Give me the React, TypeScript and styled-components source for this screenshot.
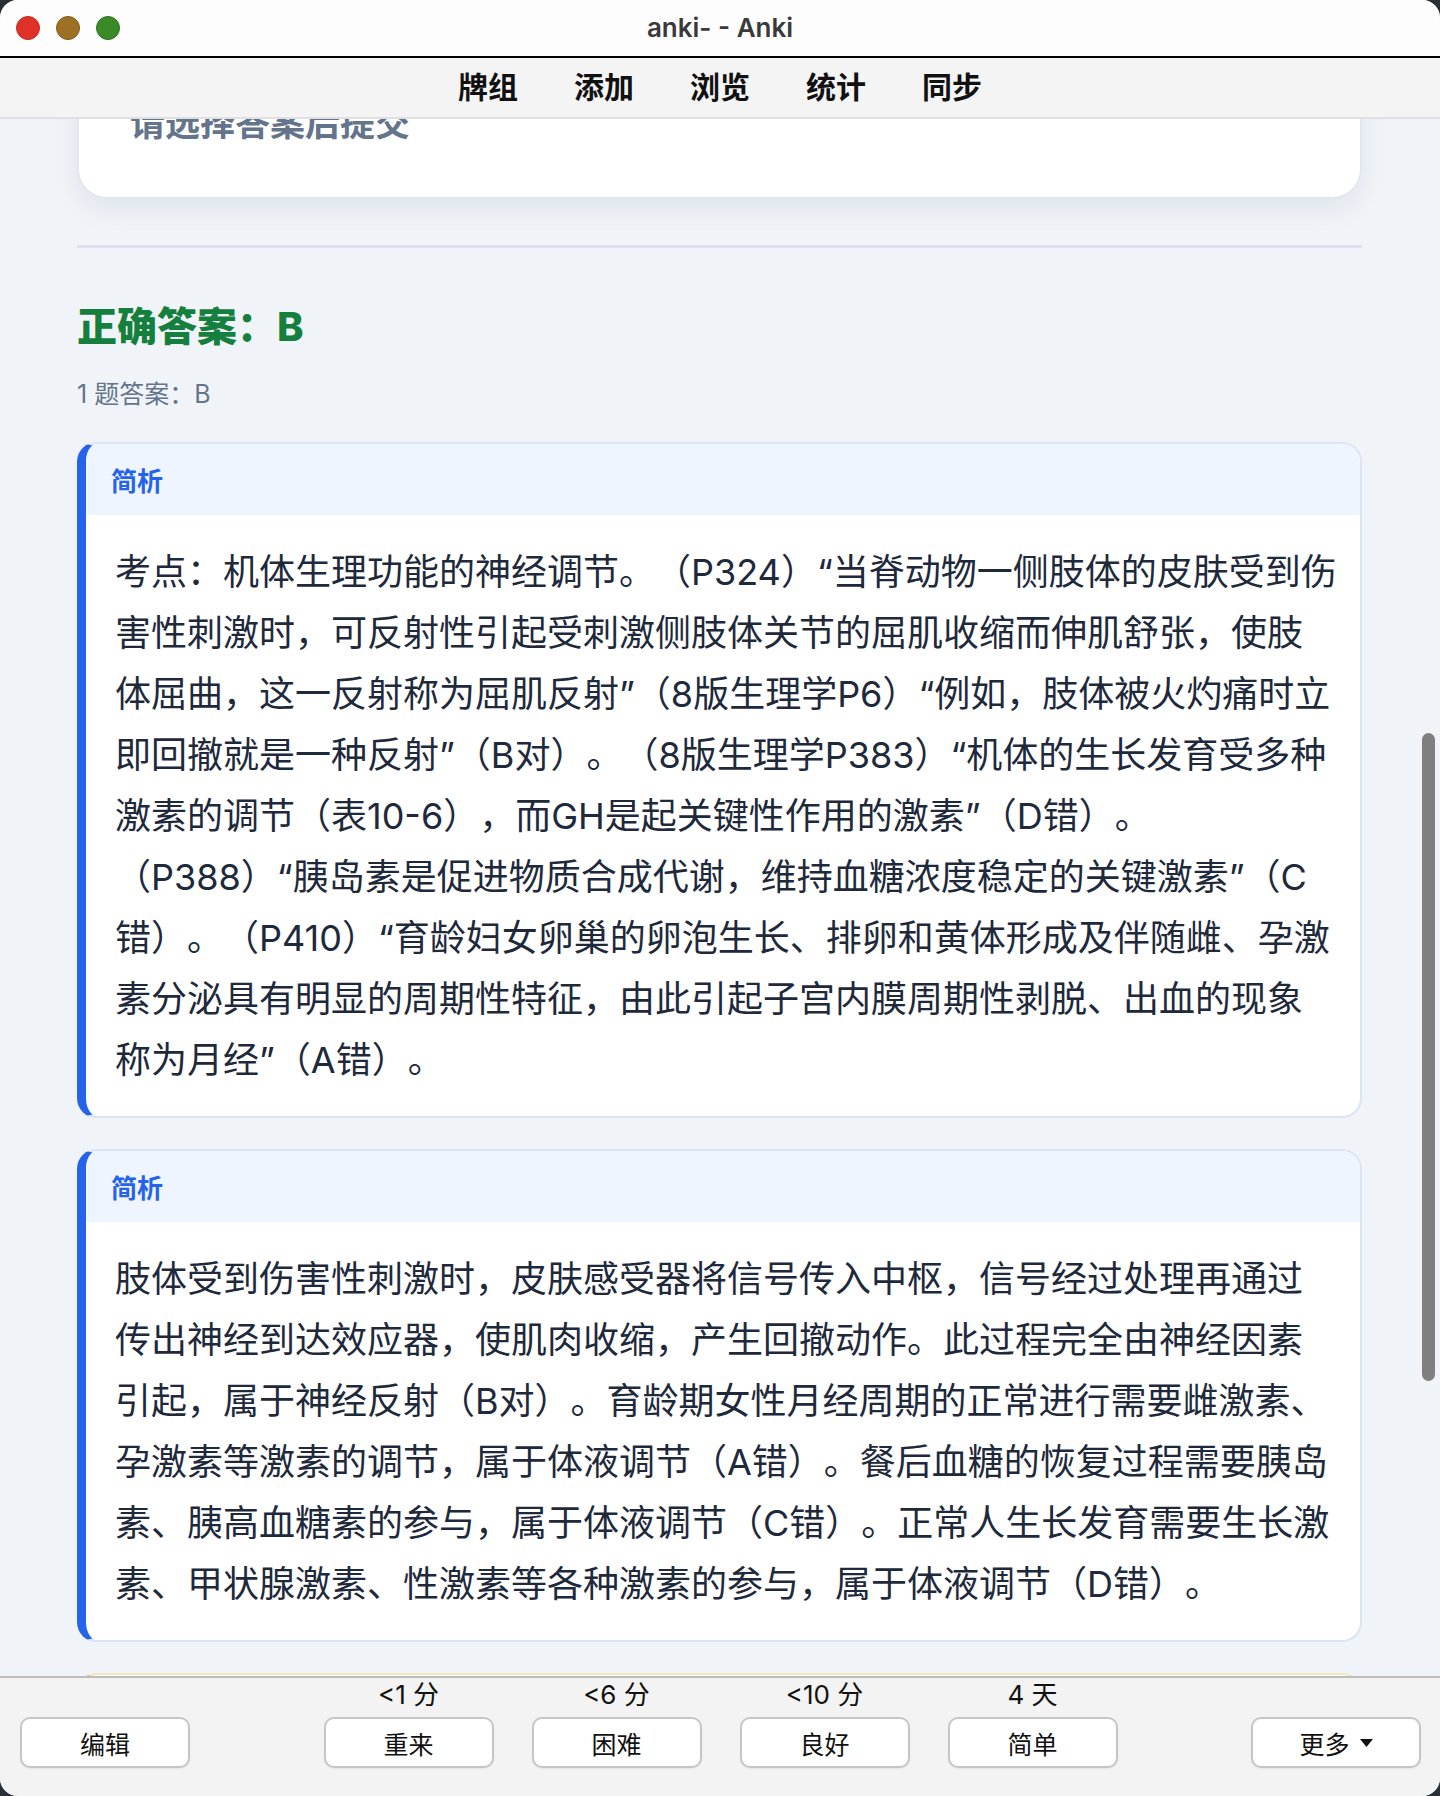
import React from 'react';
import styled, { createGlobalStyle } from 'styled-components';

const GlobalStyle = createGlobalStyle`
  html, body {
    margin: 0;
    padding: 0;
    background: #2a2f36;
  }
  body {
    font-family: Inter, "Noto Sans CJK SC", sans-serif;
    text-spacing-trim: space-all;
  }
  * {
    box-sizing: border-box;
  }
`;

const Window = styled.div`
  width: 1440px;
  height: 1796px;
  display: flex;
  flex-direction: column;
  background: #f0f4f9;
  border-radius: 18px;
  overflow: hidden;
`;

const TitleBar = styled.div`
  height: 58px;
  display: grid;
  grid-template-columns: 1fr auto 1fr;
  align-items: center;
  padding: 0 16px;
  background: #fdfdfd;
  border-bottom: 2px solid #000;
`;

const Lights = styled.div`
  display: flex;
  gap: 16px;
`;

const Light = styled.span<{ $fill: string; $edge: string }>`
  width: 24px;
  height: 24px;
  border-radius: 50%;
  background: ${(p) => p.$fill};
  border: 1.5px solid ${(p) => p.$edge};
`;

const WindowTitle = styled.div`
  font-family: Inter, sans-serif;
  font-size: 26px;
  font-weight: 600;
  color: #3a3a3a;
  margin-top: -2px;
`;

const Toolbar = styled.nav`
  height: 61px;
  display: flex;
  justify-content: center;
  align-items: center;
  gap: 56px;
  padding-bottom: 5px;
  background: #f4f4f4;
  border-bottom: 2px solid #e0e0e0;
`;

const ToolItem = styled.span`
  font-family: "Noto Sans CJK SC", sans-serif;
  font-size: 30px;
  font-weight: 700;
  color: #111;
`;

const Content = styled.main`
  flex: 1;
  position: relative;
  overflow: hidden;
`;

const Page = styled.div`
  padding: 0 78px 0 77px;
  display: flex;
  flex-direction: column;
`;

const QuestionCard = styled.div`
  margin-top: -59px;
  padding: 37px 51px 52px;
  background: #fff;
  border: 2px solid #e2e8f0;
  border-top: none;
  border-radius: 0 0 30px 30px;
  box-shadow: 0 10px 28px rgba(15, 23, 42, 0.07);
  font-family: "Noto Sans CJK SC", sans-serif;
  font-size: 35px;
  line-height: 48px;
  font-weight: 700;
  color: #64748b;
`;

const Divider = styled.hr`
  margin: 46px 0 0;
  height: 3px;
  border: none;
  background: #dbe2eb;
`;

const AnswerHeading = styled.h2`
  margin: 53px 0 0;
  font-family: Inter, "Noto Sans CJK SC", sans-serif;
  font-size: 40px;
  line-height: 52px;
  font-weight: 800;
  color: #15803d;
`;

const AnswerNote = styled.div`
  margin-top: 23px;
  font-family: Inter, "Noto Sans CJK SC", sans-serif;
  font-size: 25px;
  line-height: 36px;
  color: #64748b;
`;

const Cards = styled.div`
  margin-top: 30px;
  display: flex;
  flex-direction: column;
  gap: 31px;
`;

const Card = styled.section<{ $accent: string; $head: string; $edge: string }>`
  background: #fff;
  border: 2px solid ${(p) => p.$edge};
  border-left: 9px solid ${(p) => p.$accent};
  border-radius: 20px;
  overflow: hidden;

  header {
    background: ${(p) => p.$head};
  }
`;

const CardHead = styled.header`
  height: 71px;
  display: flex;
  align-items: center;
  padding-left: 25px;
  font-family: "Noto Sans CJK SC", sans-serif;
  font-size: 26px;
  font-weight: 700;
  color: #2563eb;
`;

const CardBody = styled.div`
  padding: 27px 28px 25px 29px;
  font-family: Inter, "Noto Sans CJK SC", sans-serif;
  font-size: 36px;
  line-height: 61px;
  color: #1e293b;
`;

const Line = styled.div`
  white-space: nowrap;
`;

const Thumb = styled.div`
  position: absolute;
  right: 5px;
  top: 614px;
  width: 13px;
  height: 648px;
  border-radius: 7px;
  background: #7f7f7f;
`;

const BottomBar = styled.footer`
  height: 120px;
  display: grid;
  grid-template-columns: 1fr auto 1fr;
  align-items: start;
  padding: 2px 19px 0 20px;
  background: #f3f3f3;
  border-top: 2px solid #bcbcbc;
`;

const SideSlot = styled.div<{ $end?: boolean }>`
  display: flex;
  justify-content: ${(p) => (p.$end ? 'flex-end' : 'flex-start')};
  padding-top: 37px;
`;

const Answers = styled.div`
  display: flex;
  gap: 38px;
`;

const AnswerColumn = styled.div`
  display: flex;
  flex-direction: column;
  align-items: center;
  gap: 7px;
`;

const Due = styled.span`
  font-family: Inter, "Noto Sans CJK SC", sans-serif;
  font-size: 26px;
  line-height: 30px;
  color: #111;
`;

const Button = styled.button`
  width: 170px;
  height: 51px;
  display: flex;
  align-items: center;
  justify-content: center;
  gap: 10px;
  background: #fff;
  border: 2px solid #c6c6c6;
  border-radius: 10px;
  box-shadow: 0 1px 2px rgba(0, 0, 0, 0.06);
  font-family: "Noto Sans CJK SC", sans-serif;
  font-size: 25px;
  color: #111;
  padding: 0;
`;

const analysis: string[][] = [
  [
    '考点：机体生理功能的神经调节。（P324）“当脊动物一侧肢体的皮肤受到伤',
    '害性刺激时，可反射性引起受刺激侧肢体关节的屈肌收缩而伸肌舒张，使肢',
    '体屈曲，这一反射称为屈肌反射”（8版生理学P6）“例如，肢体被火灼痛时立',
    '即回撤就是一种反射”（B对）。（8版生理学P383）“机体的生长发育受多种',
    '激素的调节（表10-6），而GH是起关键性作用的激素”（D错）。',
    '（P388）“胰岛素是促进物质合成代谢，维持血糖浓度稳定的关键激素”（C',
    '错）。（P410）“育龄妇女卵巢的卵泡生长、排卵和黄体形成及伴随雌、孕激',
    '素分泌具有明显的周期性特征，由此引起子宫内膜周期性剥脱、出血的现象',
    '称为月经”（A错）。',
  ],
  [
    '肢体受到伤害性刺激时，皮肤感受器将信号传入中枢，信号经过处理再通过',
    '传出神经到达效应器，使肌肉收缩，产生回撤动作。此过程完全由神经因素',
    '引起，属于神经反射（B对）。育龄期女性月经周期的正常进行需要雌激素、',
    '孕激素等激素的调节，属于体液调节（A错）。餐后血糖的恢复过程需要胰岛',
    '素、胰高血糖素的参与，属于体液调节（C错）。正常人生长发育需要生长激',
    '素、甲状腺激素、性激素等各种激素的参与，属于体液调节（D错）。',
  ],
];

const ratings = [
  { due: '<1 分', label: '重来' },
  { due: '<6 分', label: '困难' },
  { due: '<10 分', label: '良好' },
  { due: '4 天', label: '简单' },
];

const App: React.FC = () => {
  return (
    <>
      <GlobalStyle />
      <Window>
        <TitleBar>
          <Lights>
            <Light $fill="#df3127" $edge="#c22a20" />
            <Light $fill="#9c7124" $edge="#7d5a1a" />
            <Light $fill="#3a8a27" $edge="#2e711f" />
          </Lights>
          <WindowTitle>anki- - Anki</WindowTitle>
          <div />
        </TitleBar>

        <Toolbar>
          {['牌组', '添加', '浏览', '统计', '同步'].map((t) => (
            <ToolItem key={t}>{t}</ToolItem>
          ))}
        </Toolbar>

        <Content>
          <Page>
            <QuestionCard>请选择答案后提交</QuestionCard>
            <Divider />
            <AnswerHeading>正确答案：B</AnswerHeading>
            <AnswerNote>1 题答案：B</AnswerNote>
            <Cards>
              {analysis.map((lines, i) => (
                <Card key={i} $accent="#2563eb" $head="#eef5ff" $edge="#dbe4f0">
                  <CardHead>简析</CardHead>
                  <CardBody>
                    {lines.map((l, j) => (
                      <Line key={j}>{l}</Line>
                    ))}
                  </CardBody>
                </Card>
              ))}
              {/* next note card, only its top edge is scrolled into view */}
              <Card $accent="#d97706" $head="#fffbeb" $edge="#f1e6c6">
                <CardHead />
              </Card>
            </Cards>
          </Page>
          <Thumb />
        </Content>

        <BottomBar>
          <SideSlot>
            <Button>编辑</Button>
          </SideSlot>
          <Answers>
            {ratings.map((r) => (
              <AnswerColumn key={r.label}>
                <Due>{r.due}</Due>
                <Button>{r.label}</Button>
              </AnswerColumn>
            ))}
          </Answers>
          <SideSlot $end>
            <Button>
              更多
              <svg width="13" height="8" viewBox="0 0 13 8">
                <path d="M0 0h13L6.5 8z" fill="#111" />
              </svg>
            </Button>
          </SideSlot>
        </BottomBar>
      </Window>
    </>
  );
};

export default App;
